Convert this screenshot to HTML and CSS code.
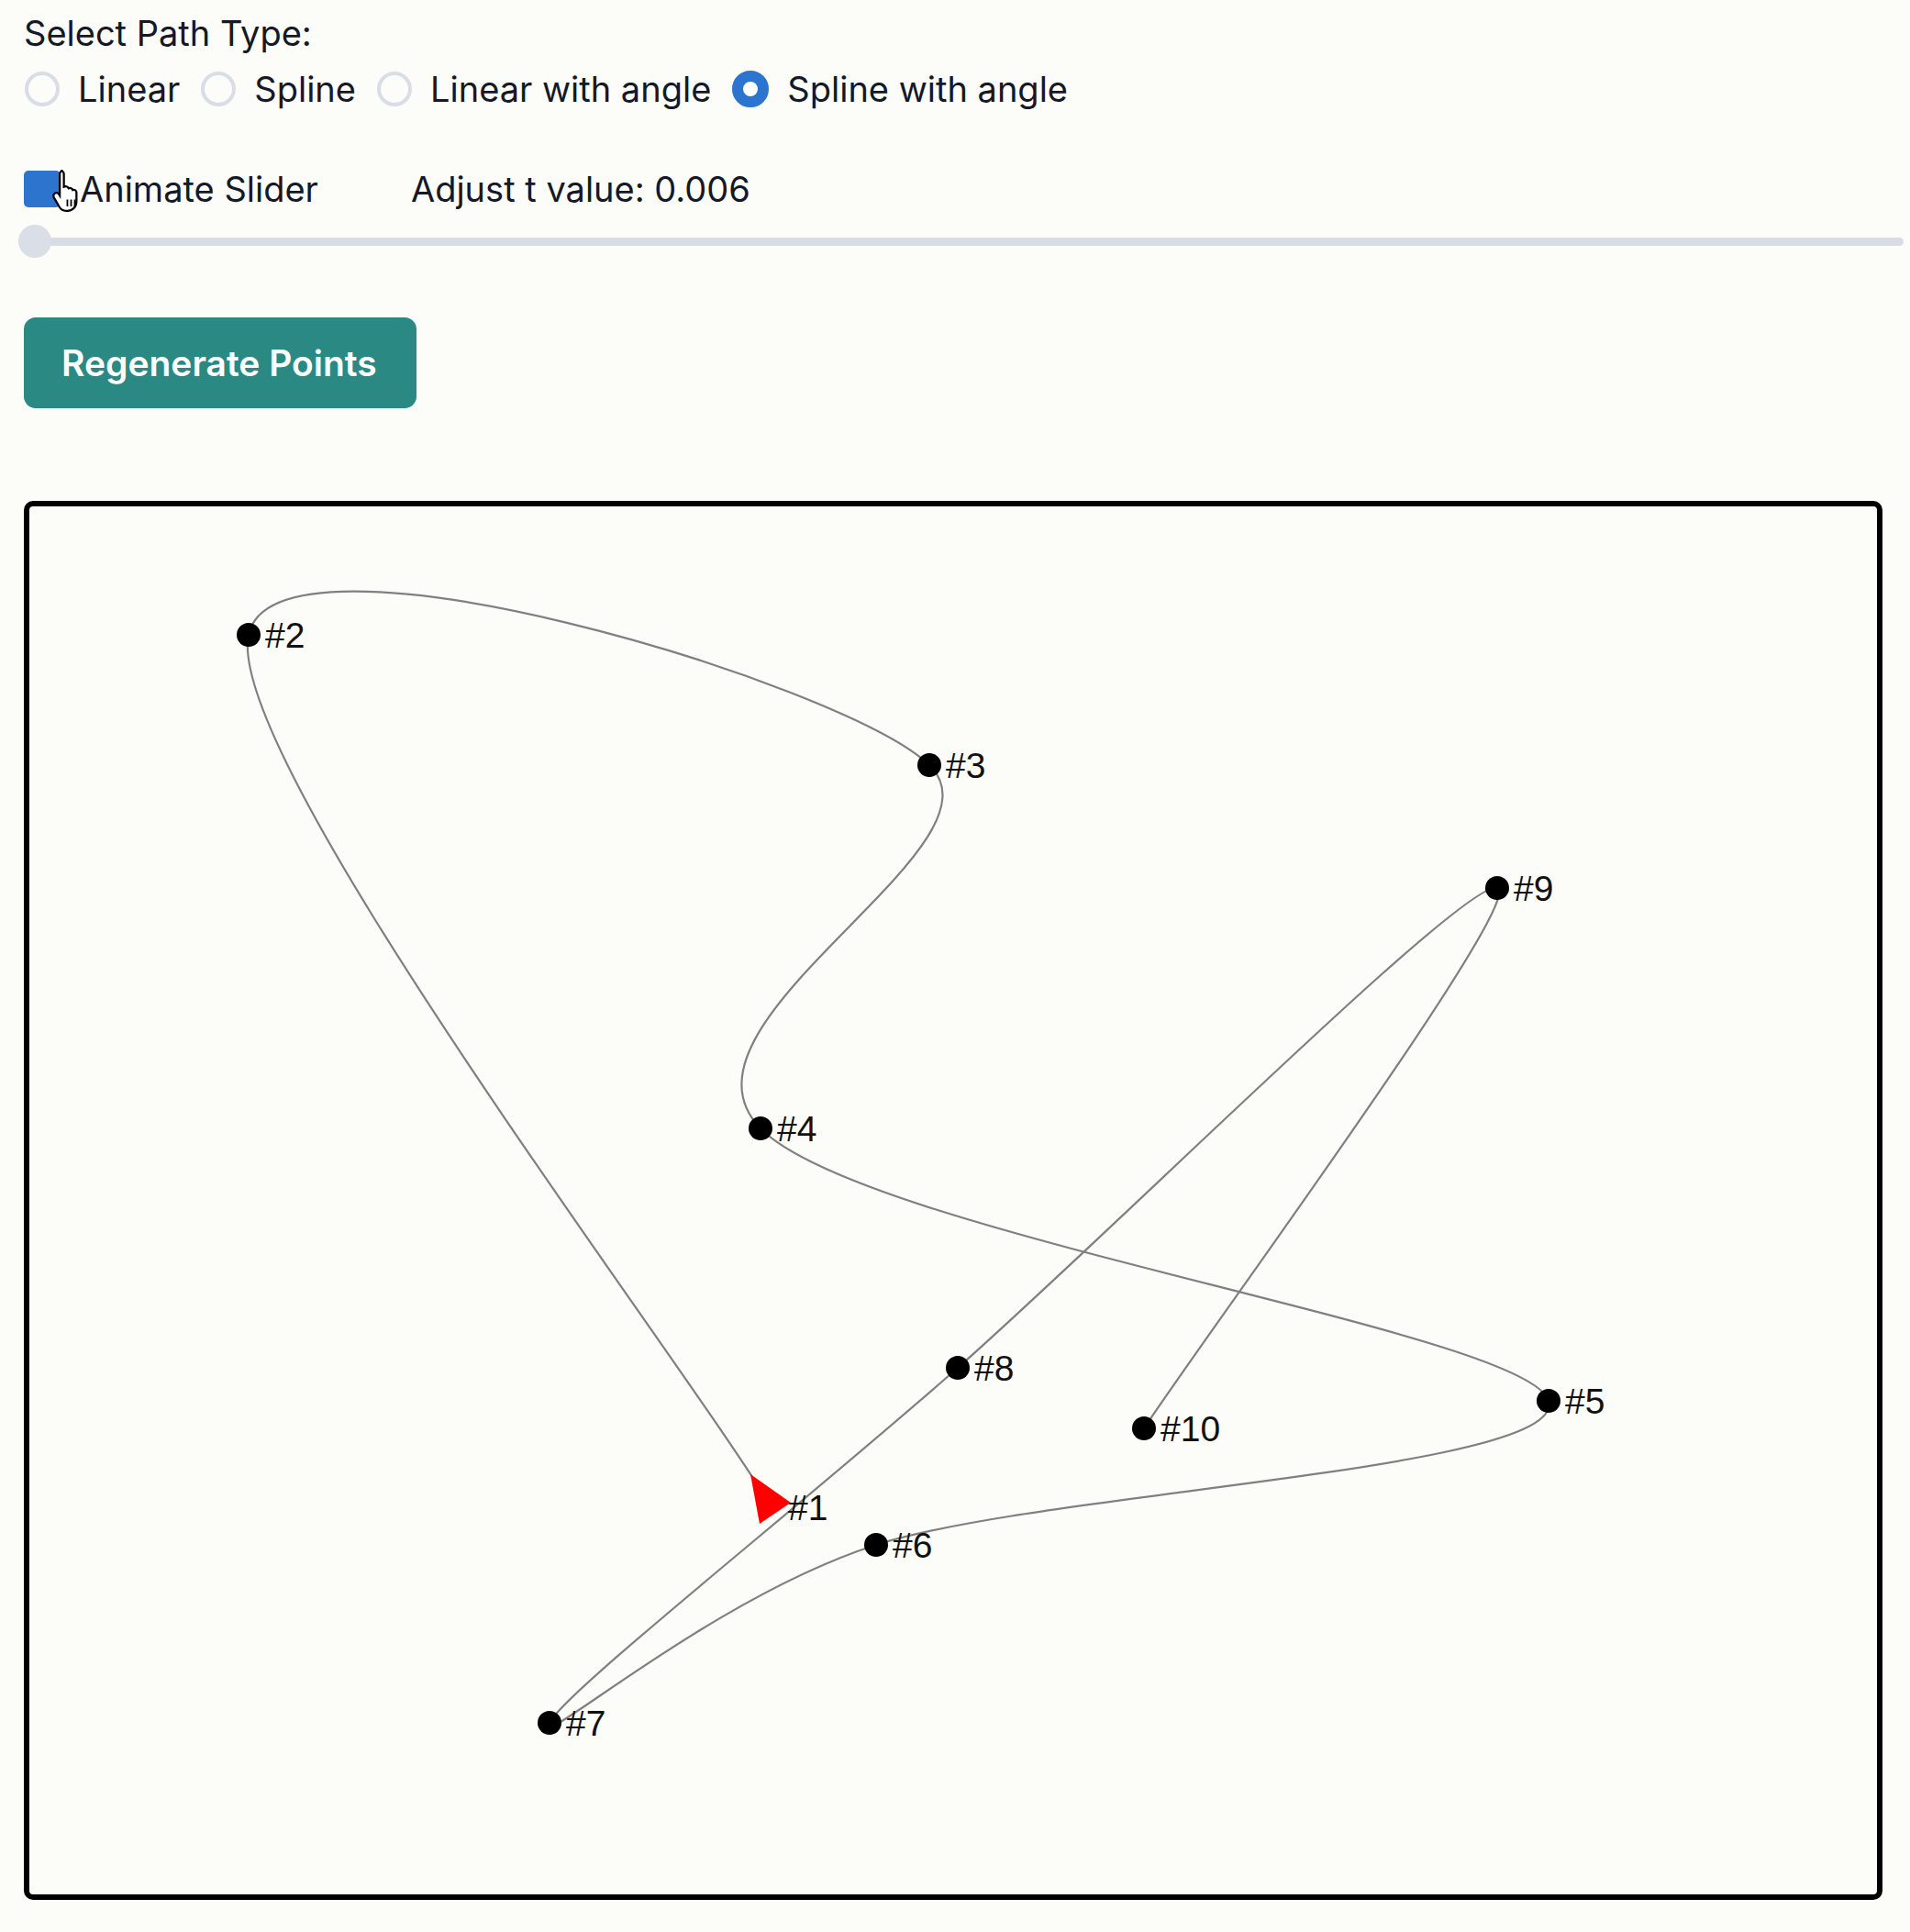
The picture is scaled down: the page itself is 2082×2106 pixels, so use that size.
FILE: index.html
```html
<!DOCTYPE html>
<html>
<head>
<meta charset="utf-8">
<title>Path Animation</title>
<link rel="stylesheet" href="styles.css">
</head>
<body>
<div class="page">
  <div class="title">Select Path Type:</div>
  <div class="radios">
    <label class="opt"><span class="radio"></span><span>Linear</span></label>
    <label class="opt"><span class="radio"></span><span>Spline</span></label>
    <label class="opt"><span class="radio"></span><span>Linear with angle</span></label>
    <label class="opt"><span class="radio on"></span><span>Spline with angle</span></label>
  </div>
  <div class="controls">
    <label class="check">
      <span class="box"></span>
      <svg class="cursor" width="36" height="50" viewBox="0 0 16 22">
        <path d="M5 1.3c.8 0 1.5.7 1.5 1.5v6.3l.3-.1c.8-.3 1.7 0 2 .8.8-.4 1.7 0 2 .8.9-.3 1.8.3 1.8 1.2v4.3c0 2.6-1.8 4.6-4.3 4.6H7.6c-1.4 0-2.6-.7-3.3-1.9L1.7 14.3c-.5-.8-.2-1.8.6-2.2.6-.3 1.3-.1 1.7.4l.5.8V2.8c0-.8.7-1.5 1.5-1.5z" fill="#fff" stroke="#000" stroke-width="1"/>
        <path d="M8.2 15.2v3.4M10 15.2v3.4M11.8 15.2v3.4" stroke="#000" stroke-width=".8"/>
      </svg>
      <span>Animate Slider</span>
    </label>
    <span class="tval">Adjust t value: 0.006</span>
  </div>
  <input class="slider" type="range" min="0" max="1" step="0.001" value="0">
  <button class="btn">Regenerate Points</button>
  <div class="stage">
    <svg class="plot" width="2014" height="1513" viewBox="32 552 2014 1513">
      <path class="curve" d="M841 1643 C746 1484.5 242.3 826.8 271 692 C299.7 557.2 920 744.3 1013 834 C1106 923.7 716.5 1114.5 829 1230 C941.5 1345.5 1667 1451.3 1688 1527 C1709 1602.7 1136.5 1625.5 955 1684 C773.5 1742.5 584.2 1910.2 599 1878 C613.8 1845.8 871.8 1642.7 1044 1491 C1216.2 1339.3 1598.2 957 1632 968 C1665.8 979 1311.2 1458.8 1247 1557"/>
      <g class="dots">
        <circle cx="271" cy="692" r="13"/>
        <circle cx="1013" cy="834" r="13"/>
        <circle cx="829" cy="1230" r="13"/>
        <circle cx="1688" cy="1527" r="13"/>
        <circle cx="955" cy="1684" r="13"/>
        <circle cx="599" cy="1878" r="13"/>
        <circle cx="1044" cy="1491" r="13"/>
        <circle cx="1632" cy="968" r="13"/>
        <circle cx="1247" cy="1557" r="13"/>
      </g>
      <polygon class="marker" points="818,1607 828,1661 862,1638"/>
      <g class="labels">
        <text x="859" y="1657">#1</text>
        <text x="289" y="706">#2</text>
        <text x="1031" y="848">#3</text>
        <text x="847" y="1244">#4</text>
        <text x="1706" y="1541">#5</text>
        <text x="973" y="1698">#6</text>
        <text x="617" y="1892">#7</text>
        <text x="1062" y="1505">#8</text>
        <text x="1650" y="982">#9</text>
        <text x="1265" y="1571">#10</text>
      </g>
    </svg>
  </div>
</div>
</body>
</html>
```
FILE: styles.css
```css
html, body {
  margin: 0;
  padding: 0;
  background: #fcfcf8;
}
body {
  font-family: Inter, "Noto Sans", "Liberation Sans", sans-serif;
  color: #151826;
  font-size: 38px;
}
.page {
  padding-left: 26px;
  display: flex;
  flex-direction: column;
  align-items: flex-start;
}
.title {
  margin-top: 14px;
  line-height: 45px;
}
.radios {
  margin-top: 16px;
  height: 44px;
  display: flex;
  align-items: center;
  gap: 22px;
}
.opt {
  display: flex;
  align-items: center;
  gap: 20px;
}
.radio {
  width: 38px;
  height: 38px;
  box-sizing: border-box;
  border-radius: 50%;
  border: 4px solid #d8dde8;
  margin-left: 1px;
}
.radio.on {
  border: 12px solid #2b74cf;
  background: #fff;
  width: 40px;
  height: 40px;
}
.controls {
  margin-top: 67px;
  height: 40px;
  display: flex;
  align-items: center;
  gap: 101px;
}
.check {
  position: relative;
  display: flex;
  align-items: center;
  gap: 21px;
}
.box {
  width: 40px;
  height: 40px;
  border-radius: 5px;
  background: #2d74cf;
}
.cursor {
  position: absolute;
  left: 29px;
  top: 0;
}
.slider {
  -webkit-appearance: none;
  appearance: none;
  margin: 19px 0 0 -6px;
  width: 2055px;
  height: 36px;
  background: transparent;
  padding: 0;
}
.slider::-webkit-slider-runnable-track {
  height: 9px;
  background: #d8dce5;
  border-radius: 5px;
}
.slider::-webkit-slider-thumb {
  -webkit-appearance: none;
  appearance: none;
  width: 36px;
  height: 36px;
  border-radius: 50%;
  background: #dadee6;
  margin-top: -13.5px;
  border: none;
}
.btn {
  margin-top: 65px;
  height: 99px;
  padding: 0 43px 0 41px;
  border: none;
  border-radius: 13px;
  background: #2a8a83;
  color: #fff;
  font-family: Inter, "Noto Sans", sans-serif;
  font-size: 39px;
  font-weight: 600;
}
.stage {
  margin-top: 101px;
  width: 2014px;
  height: 1513px;
  border: 6px solid #000;
  border-radius: 10px;
}
.plot {
  display: block;
}
.curve {
  fill: none;
  stroke: #808080;
  stroke-width: 2.2;
}
.dots circle {
  fill: #000;
}
.marker {
  fill: #ff0000;
}
.labels text {
  font-family: "Liberation Sans", Arial, sans-serif;
  font-size: 39px;
  fill: #111;
}
```
